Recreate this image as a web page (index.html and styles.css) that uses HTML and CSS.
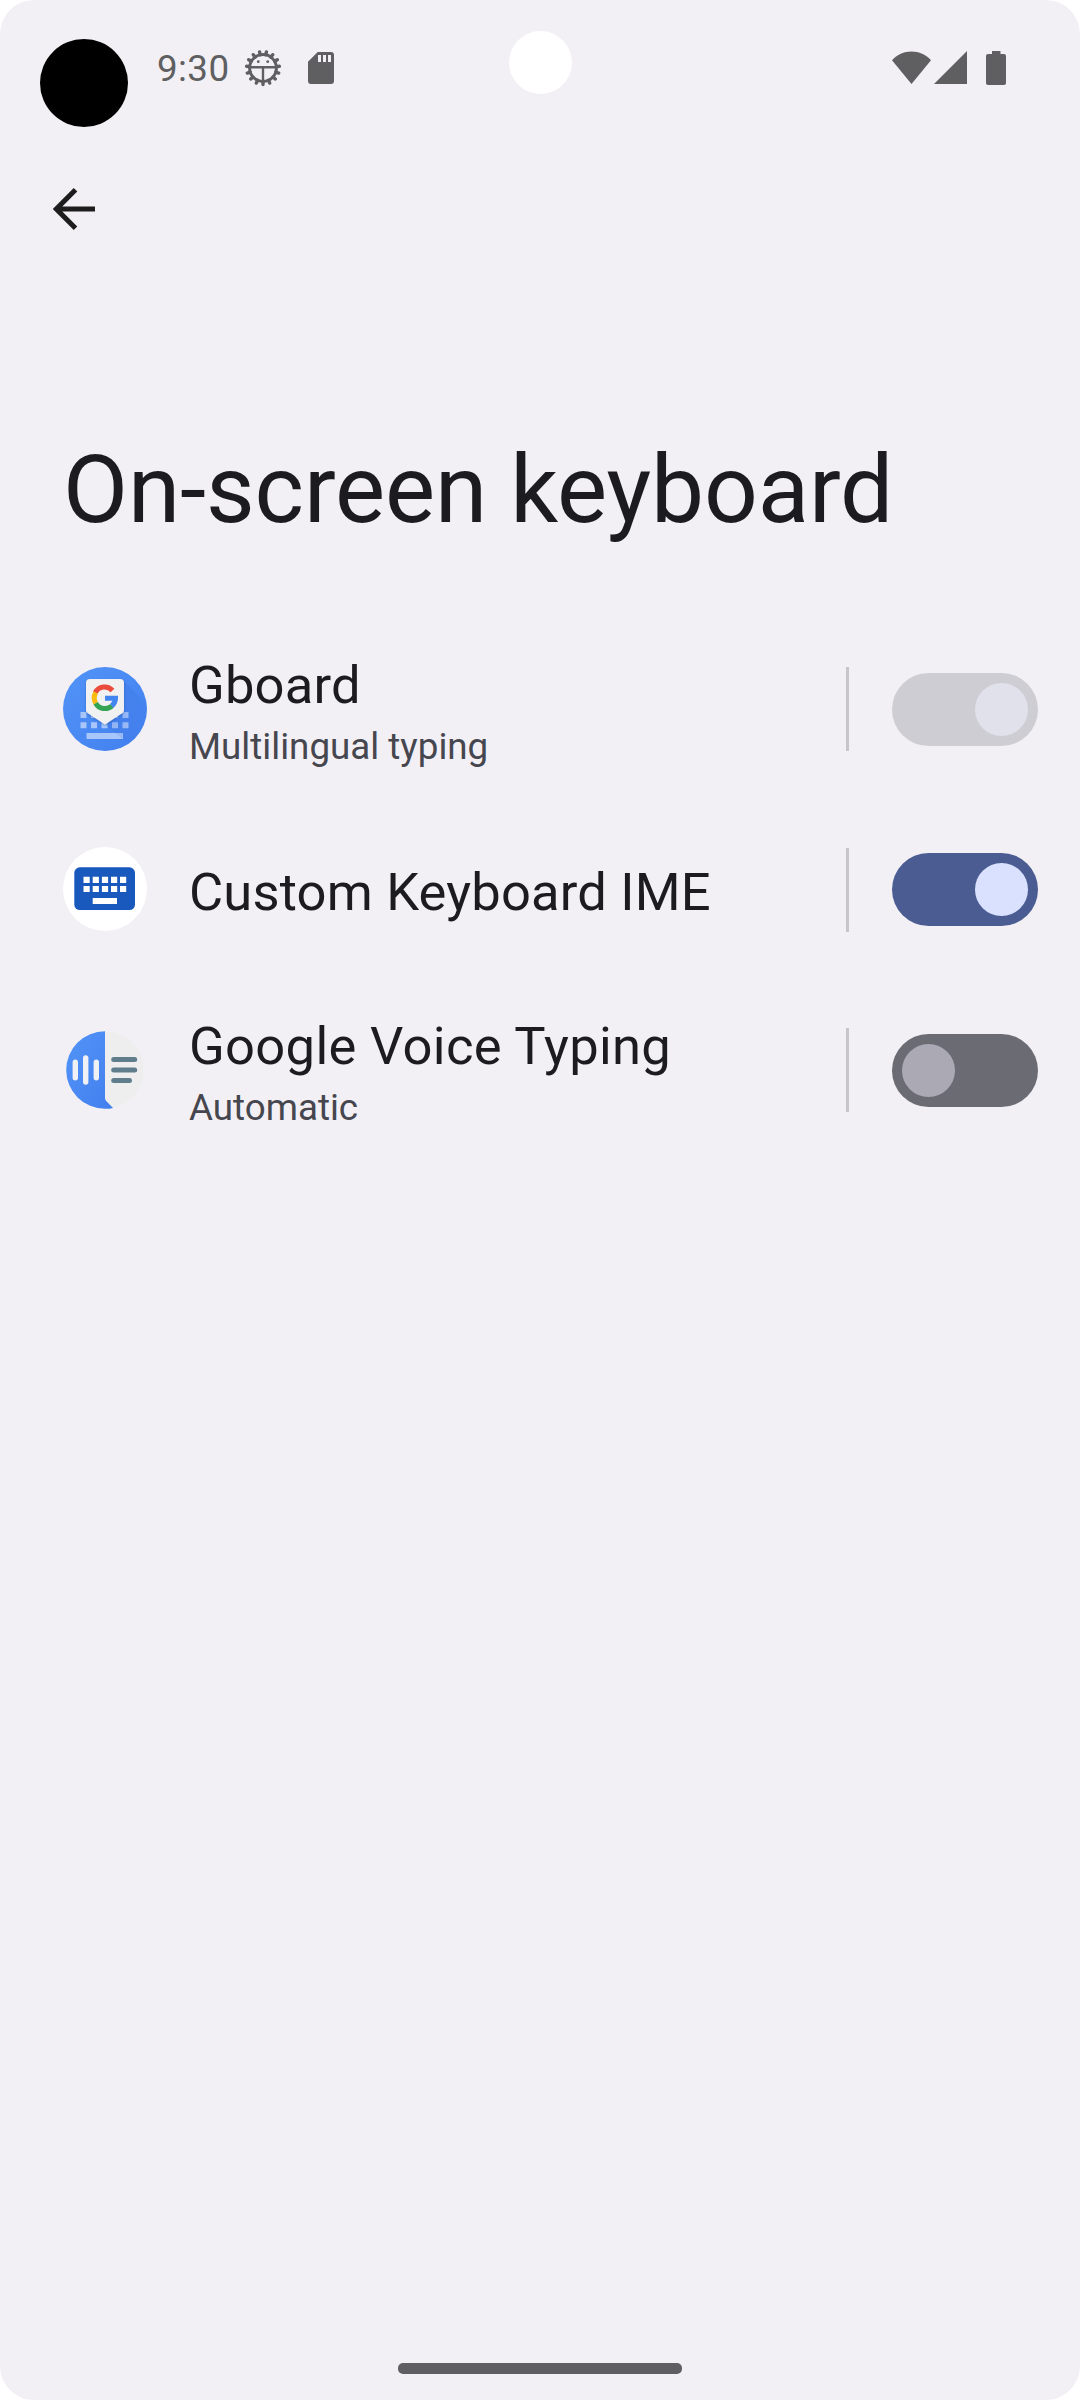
FILE: index.html
```html
<!DOCTYPE html>
<html lang="en">
<head>
<meta charset="utf-8">
<title>On-screen keyboard</title>
<link rel="stylesheet" href="styles.css">
</head>
<body>
<div class="screen">
  <div class="overlay-dot"></div>
  <div class="camera"></div>
  <header class="status">
    <div class="status-left">
      <span class="clock">9:30</span>
      <svg class="debug-icon" viewBox="0 0 38 38">
        <circle cx="19" cy="19" r="13.400" fill="none" stroke="#5f5f61" stroke-width="3"/>
        <path fill="none" stroke="#5f5f61" stroke-width="3.400" stroke-linecap="round" d="M19 32.500V35.500M24.500 31.300L25.700 34.100M29 28L31.300 30M31.800 23.200L34.700 24.100M32.400 17.600L35.400 17.300M30.700 12.200L33.300 10.700M26.900 8.100L28.700 5.700M21.800 5.800L22.400 2.900M16.200 5.800L15.600 2.900M11.100 8.100L9.300 5.700M7.300 12.200L4.700 10.700M5.600 17.600L2.600 17.300M6.200 23.200L3.300 24.100M9 28L6.700 30M13.500 31.300L12.300 34.100"/>
        <path d="M6 18.300h26M19 18.300v14" stroke="#5f5f61" stroke-width="2.400"/>
        <circle cx="14.300" cy="12.700" r="1.400" fill="#5f5f61"/><circle cx="23.700" cy="12.700" r="1.400" fill="#5f5f61"/>
      </svg>
      <svg class="sd-icon" viewBox="0 0 26 32">
        <path fill="#5f5f61" fill-rule="evenodd" d="M9.700 0H23a3 3 0 0 1 3 3v26a3 3 0 0 1-3 3H3a3 3 0 0 1-3-3V9.700zM10 3v7h3V3zM15 3v7h3V3zM20 3v7h3V3z"/>
      </svg>
    </div>
    <div class="status-right">
      <svg class="wifi-icon" viewBox="0 0 39 33"><path fill="#5f5f61" d="M0 9.300C5 3.500 12 .5 19.500.5S34 3.500 39 9.300L19.500 33z"/></svg>
      <svg class="signal-icon" viewBox="0 0 33 33"><path fill="#5f5f61" d="M0 33L33 0v33z"/></svg>
      <svg class="battery-icon" viewBox="0 0 20 34"><path fill="#5f5f61" d="M6 0h8.500v3H18a2 2 0 0 1 2 2v27a2 2 0 0 1-2 2H2a2 2 0 0 1-2-2V5a2 2 0 0 1 2-2h4z"/></svg>
    </div>
  </header>
  <nav class="toolbar">
    <svg class="back-icon" viewBox="0 0 42 42"><path d="M42 21H5M22.500 1.800L3.300 21l19.200 19.200" fill="none" stroke="#1d1d1e" stroke-width="5"/></svg>
  </nav>
  <h1 class="title">On-screen keyboard</h1>
  <main class="list">
    <section class="row">
      <svg class="app-icon" viewBox="0 0 84 84">
        <defs>
          <linearGradient id="blue" x1="0" y1="0" x2="1" y2="1"><stop offset="0" stop-color="#5294f8"/><stop offset="1" stop-color="#427fee"/></linearGradient>
          <linearGradient id="shade" x1="0" y1="0" x2="1" y2="1"><stop offset="0" stop-color="#3267d6" stop-opacity=".35"/><stop offset="1" stop-color="#3267d6" stop-opacity="0"/></linearGradient>
          <filter id="soft" x="-20%" y="-20%" width="140%" height="140%"><feDropShadow dx="0" dy="1" stdDeviation="1" flood-color="#173c86" flood-opacity=".4"/></filter>
        </defs>
        <circle cx="42" cy="42" r="42" fill="url(#blue)"/>
        <g fill="#a9c6fb">
          <path d="M17.500 45h6v6h-6zM28 45h6v6h-6zM38.500 45h6v6h-6zM49 45h6v6h-6zM59.500 45h6v6h-6zM17.500 55.300h6v6h-6zM28 55.300h6v6h-6zM38.500 55.300h6v6h-6zM49 55.300h6v6h-6zM59.500 55.300h6v6h-6zM23.500 66h36.500v6H23.500z"/>
        </g>
        <path d="M60 13L84 37A42 42 0 0 1 65 77L42 57L60 44z" fill="url(#shade)"/>
        <path d="M27 12h30q4 0 4 4v27q0 2-1.500 3L42 57.500 24.500 46Q23 45 23 43V16q0-4 4-4z" fill="#f1f1f1" filter="url(#soft)"/>
        <g fill="none" stroke-width="5">
          <path d="M32.200 25.700A10.500 10.500 0 0 1 49.500 23.500" stroke="#ea4b3d"/>
          <path d="M32.800 36.400A10.500 10.500 0 0 1 32.800 25.600" stroke="#fbbc11"/>
          <path d="M49 38.800A10.500 10.500 0 0 1 32.700 36.200" stroke="#34a353"/>
          <path d="M42 31.300H52.500A10.500 10.500 0 0 1 48.800 39" stroke="#4285f0"/>
        </g>
      </svg>
      <div class="labels"><div class="name">Gboard</div><div class="summary">Multilingual typing</div></div>
      <div class="divider"></div>
      <div class="switch on disabled"><div class="thumb"></div></div>
    </section>
    <section class="row row-single">
      <svg class="app-icon" viewBox="0 0 84 84">
        <circle cx="42" cy="42" r="42" fill="#fff"/>
        <rect x="11.300" y="20.300" width="60.700" height="42.700" rx="5.500" fill="#1958bd"/>
        <path fill="#fff" d="M20.500 29.700h6.200v6.200h-6.200zM29.700 29.700h6.200v6.200h-6.200zM38.900 29.700h6.200v6.200h-6.200zM48 29.700h6.200v6.200H48zM57 29.700h6.200v6.200H57zM20.500 38.900h6.200v6.200h-6.200zM29.700 38.900h6.200v6.200h-6.200zM38.900 38.900h6.200v6.200h-6.200zM48 38.900h6.200v6.200H48zM57 38.900h6.200v6.200H57zM29.700 51H54v6H29.700z"/>
      </svg>
      <div class="labels"><div class="name">Custom Keyboard IME</div></div>
      <div class="divider"></div>
      <div class="switch on"><div class="thumb"></div></div>
    </section>
    <section class="row">
      <svg class="app-icon" viewBox="0 0 84 84">
        <circle cx="42" cy="42" r="38.800" fill="#eeeeef"/>
        <path d="M42 3.200A38.800 38.800 0 0 0 42 80.800Q46 80.900 50 79.900L43.200 73Q42 71.700 42 70z" fill="url(#blue)"/>
        <g stroke="#f0f1f4" stroke-width="5.400" stroke-linecap="round"><path d="M12.300 34.300v15.500M22.700 30v24M33.300 34.300v15.500"/></g>
        <g stroke="#607d8b" stroke-width="5" stroke-linecap="round"><path d="M50.700 31.500h21M50.700 42h21M50.700 52.500h15.800"/></g>
      </svg>
      <div class="labels"><div class="name name-wide">Google Voice Typing</div><div class="summary">Automatic</div></div>
      <div class="divider"></div>
      <div class="switch"><div class="thumb"></div></div>
    </section>
  </main>
  <div class="home-bar"></div>
</div>
</body>
</html>
```

FILE: styles.css
```css
* { box-sizing: border-box; }
body { margin: 0; background: #fff; font-family: Roboto, sans-serif; color: #1b1b20; }
svg { display: block; flex: none; }
.screen {
  position: relative;
  display: flex;
  flex-direction: column;
  width: 1080px;
  height: 2400px;
  border-radius: 34px;
  background: #f2f0f5;
  overflow: hidden;
}
.overlay-dot { position: absolute; left: 40px; top: 39px; width: 88px; height: 88px; border-radius: 50%; background: #000; }
.camera { position: absolute; left: 509px; top: 31px; width: 63px; height: 63px; border-radius: 50%; background: #fff; }

.status {
  display: flex;
  justify-content: space-between;
  align-items: center;
  height: 136px;
  padding: 0 74px 0 157px;
}
.status-left, .status-right { display: flex; align-items: center; }
.clock { width: 87px; padding-top: 2px; font-size: 36.75px; line-height: 44px; letter-spacing: 0.4px; color: #5f5f61; }
.debug-icon { width: 38px; height: 38px; margin-bottom: 1px; }
.sd-icon { width: 26px; height: 32px; margin-left: 26px; }
.wifi-icon { width: 39px; height: 33px; margin-bottom: 1px; }
.signal-icon { width: 33px; height: 33px; margin: 0 0 1px 3px; }
.battery-icon { width: 20px; height: 34px; margin-left: 19px; }

.toolbar { display: flex; align-items: center; height: 147px; padding: 0 0 1px 53px; }
.back-icon { width: 42px; height: 42px; }

.title { margin: 151px 0 0 63px; font-size: 94.5px; font-weight: 400; line-height: 112px; letter-spacing: -0.13px; white-space: nowrap; }

.list { display: flex; flex-direction: column; margin-top: 73px; }
.row { display: flex; align-items: center; height: 181px; padding: 0 42px 0 63px; }
.row-single { height: 180px; }
.app-icon { width: 84px; height: 84px; margin-bottom: 1px; }
.labels { flex: 1; padding: 3px 0 0 42px; white-space: nowrap; }
.name { font-size: 52.5px; line-height: 62px; letter-spacing: 0.18px; }
.name-wide { letter-spacing: 0.32px; }
.summary { margin-top: 9px; font-size: 36.75px; line-height: 43px; color: #46464f; }
.divider { width: 3px; height: 84px; margin-bottom: 1px; background: #c6c5cb; }
.switch { display: flex; width: 146px; height: 73px; margin-left: 43px; padding: 10px; border-radius: 37px; background: #6b6b74; }
.switch.on { justify-content: flex-end; background: #4a5c92; }
.thumb { width: 53px; height: 53px; border-radius: 50%; background: #abaab4; }
.switch.on .thumb { background: #dae1ff; }
.switch.disabled { background: #cecdd3; }
.switch.disabled .thumb { background: #e1e1eb; }
.row-single .app-icon { margin-bottom: 2px; }
.row-single .divider { margin-bottom: 0; }
.row-single .switch { margin-bottom: 1px; }

.home-bar { width: 284px; height: 11px; margin: auto auto 26px; border-radius: 5px; background: #5f5f61; }
```
